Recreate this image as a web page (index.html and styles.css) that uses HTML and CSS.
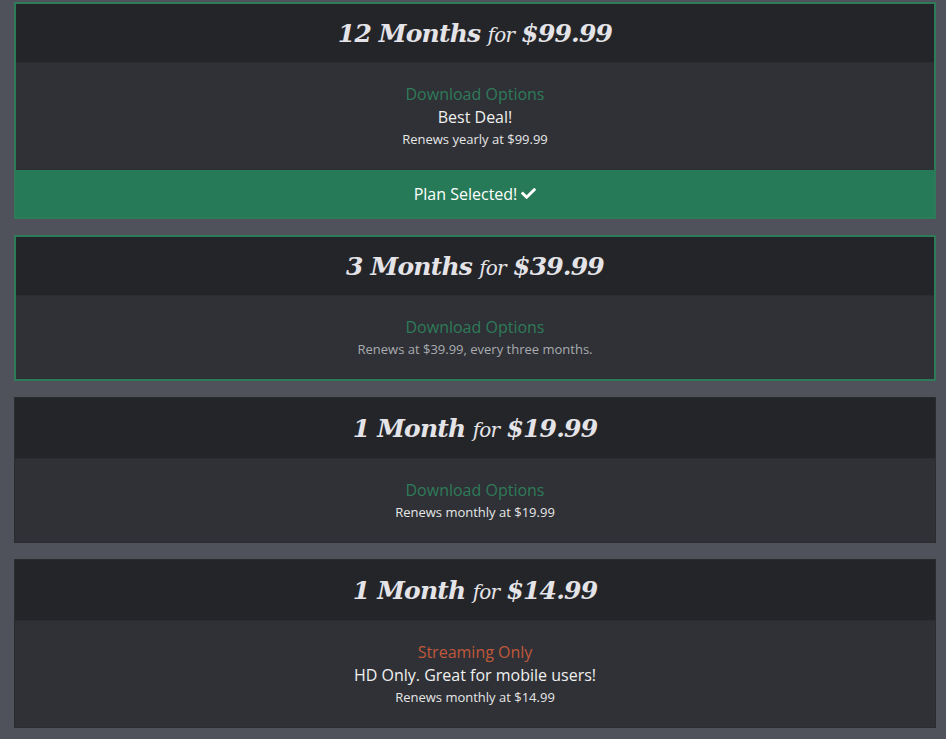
FILE: index.html
```html
<!DOCTYPE html>
<html lang="en">
<head>
    <meta charset="UTF-8">
    <meta name="viewport" content="width=device-width, initial-scale=1.0">
    <title>Plans</title>
    <link rel="stylesheet" href="styles.css">
</head>
<body>
    <div class="plans">
        <div class="plan selected">
            <div class="plan-head">
                <h2><b>12 Months</b> <span class="for">for</span> <b>$99.99</b></h2>
            </div>
            <div class="plan-body">
                <div class="type download">Download Options</div>
                <div class="note">Best Deal!</div>
                <div class="renew">Renews yearly at $99.99</div>
            </div>
            <button class="select-btn">Plan Selected!
                <svg class="check" viewBox="0 0 512 512" width="15" height="15"><path fill="currentColor" d="M173.9 439.4 7.5 273c-10-10-10-26.2 0-36.2l36.2-36.2c10-10 26.2-10 36.2 0L192 312.7 432.1 72.6c10-10 26.2-10 36.2 0l36.2 36.2c10 10 10 26.2 0 36.2L210.1 439.4c-10 10-26.2 10-36.2 0z"/></svg>
            </button>
        </div>

        <div class="plan outlined">
            <div class="plan-head">
                <h2><b>3 Months</b> <span class="for">for</span> <b>$39.99</b></h2>
            </div>
            <div class="plan-body">
                <div class="type download">Download Options</div>
                <div class="renew muted">Renews at $39.99, every three months.</div>
            </div>
        </div>

        <div class="plan">
            <div class="plan-head">
                <h2><b>1 Month</b> <span class="for">for</span> <b>$19.99</b></h2>
            </div>
            <div class="plan-body">
                <div class="type download">Download Options</div>
                <div class="renew">Renews monthly at $19.99</div>
            </div>
        </div>

        <div class="plan">
            <div class="plan-head">
                <h2><b>1 Month</b> <span class="for">for</span> <b>$14.99</b></h2>
            </div>
            <div class="plan-body">
                <div class="type streaming">Streaming Only</div>
                <div class="note">HD Only. Great for mobile users!</div>
                <div class="renew">Renews monthly at $14.99</div>
            </div>
        </div>
    </div>
</body>
</html>
```

FILE: styles.css
```css
body {
    margin: 0;
    background-color: #4f525a;
    font-family: "Open Sans", "Liberation Sans", sans-serif;
    color: #e8e8e8;
}

.plans {
    display: flex;
    flex-direction: column;
    gap: 16px;
    padding: 2px 10px 10px 14px;
}

.plan {
    border: 1px solid #2a2c30;
    background-color: #2f3136;
}

.plan.selected,
.plan.outlined {
    border: 2px solid #2e7b59;
}

.plan-head {
    background-color: #242528;
    height: 60px;
    display: flex;
    align-items: center;
    justify-content: center;
}

.plan.selected .plan-head,
.plan.outlined .plan-head {
    height: 58px;
}

.plan-head h2 {
    margin: 0;
    font-family: "DejaVu Serif", "Liberation Serif", serif;
    font-style: italic;
    font-size: 25px;
    font-weight: normal;
    color: #e4e4e8;
    letter-spacing: -0.8px;
}

.plan-head b {
    font-weight: bold;
}

.plan-head .for {
    font-size: 20px;
}

.plan-body {
    padding: 20px 0 19px;
    text-align: center;
    border-top: 1px solid #2b2d31;
}

.plan.selected .plan-body {
    padding-bottom: 20px;
}

.type {
    font-size: 16px;
    line-height: 23px;
}

.download {
    color: #2e7b59;
}

.streaming {
    color: #c0583a;
}

.note {
    font-size: 16px;
    line-height: 23px;
    color: #f0f0f0;
}

.renew {
    font-size: 13px;
    line-height: 21px;
    color: #e6e6e6;
}

.renew.muted {
    color: #a9abb0;
}

.select-btn {
    display: flex;
    align-items: center;
    justify-content: center;
    gap: 4px;
    width: 100%;
    height: 47px;
    border: none;
    background-color: #277a57;
    color: #ffffff;
    font-family: "Open Sans", "Liberation Sans", sans-serif;
    font-size: 16px;
    cursor: pointer;
}

.check {
    display: block;
}
```
